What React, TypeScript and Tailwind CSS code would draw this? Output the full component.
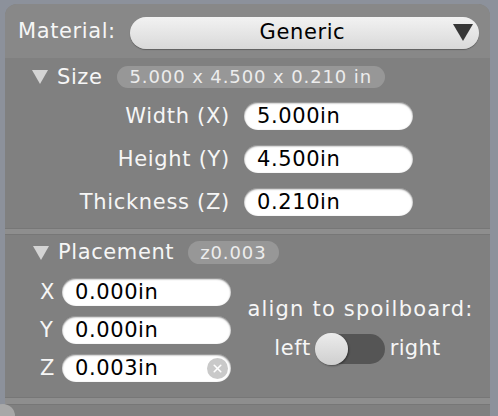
import { X } from "lucide-react";

function Field({ value, clear }: { value: string; clear?: boolean }) {
  return (
    <div className="flex items-center w-[169px] h-[28px] rounded-full bg-white shadow-[inset_0_1px_2px_rgba(0,0,0,0.55)] pl-[13px] pr-[3px]">
      <span className="flex-1 text-[21px] leading-none text-black">{value}</span>
      {clear && (
        <span className="w-[21px] h-[21px] rounded-full bg-[#c9c9c9] flex items-center justify-center">
          <X className="w-[13px] h-[13px] text-white" strokeWidth={3} />
        </span>
      )}
    </div>
  );
}

function Tri() {
  return (
    <svg width="16" height="14" viewBox="0 0 16 14" className="shrink-0">
      <polygon points="0,0 16,0 8,14" fill="#d4d4d4" />
    </svg>
  );
}

export default function App() {
  const dims = [
    ["Width (X)", "5.000in"],
    ["Height (Y)", "4.500in"],
    ["Thickness (Z)", "0.210in"],
  ];
  const place = [
    ["X", "0.000in"],
    ["Y", "0.000in"],
    ["Z", "0.003in"],
  ];

  return (
    <div className="w-[498px] h-[416px] overflow-hidden bg-[#8c919b] pt-[4px] pl-[5px] font-['DejaVu_Sans',sans-serif] tracking-[0.6px] text-[#f6f6f6]">
      <div className="w-[485px] h-[412px] bg-[#808080] rounded-t-[12px] flex flex-col relative">
        {/* Material */}
        <div className="h-[54px] bg-[#888888] rounded-t-[12px] flex items-center pl-[13px] pr-[11px] gap-[14px]">
          <span className="text-[21px] leading-none">Material:</span>
          <div className="flex-1 h-[32px] mt-[3px] rounded-full bg-gradient-to-b from-[#f2f2f2] to-[#d9d9d9] shadow-[0_1px_1px_rgba(0,0,0,0.3)] flex items-center pl-[22px] pr-[6px]">
            <span className="flex-1 text-center text-[21px] leading-none text-black">Generic</span>
            <svg width="20" height="17" viewBox="0 0 20 17">
              <polygon points="0,0 20,0 10,17" fill="#373737" />
            </svg>
          </div>
        </div>

        {/* Size */}
        <div className="h-[170px] pt-[8px] flex flex-col">
          <div className="flex items-center h-[22px] pl-[27px]">
            <Tri />
            <span className="ml-[9px] text-[21px] leading-none">Size</span>
            <span className="ml-[14px] h-[22px] px-[13px] rounded-full bg-[#979797] text-[18px] leading-[22px] tracking-[0.9px] text-[#ececec]">
              5.000 x 4.500 x 0.210 in
            </span>
          </div>
          <div className="mt-[14px] flex flex-col gap-[15px]">
            {dims.map(([l, v]) => (
              <div key={l} className="flex items-center">
                <span className="w-[225px] text-right text-[21px] leading-none tracking-[0.7px]">{l}</span>
                <div className="ml-[14px]">
                  <Field value={v} />
                </div>
              </div>
            ))}
          </div>
        </div>

        <div className="h-[7px] bg-[#8e8e8e] border-y border-[#777]" />

        {/* Placement */}
        <div className="h-[162px] pt-[6px] flex flex-col">
          <div className="flex items-center h-[23px] pl-[28px]">
            <Tri />
            <span className="ml-[9px] text-[21px] leading-none">Placement</span>
            <span className="ml-[14px] h-[23px] px-[12px] rounded-full bg-[#979797] text-[18px] leading-[23px] tracking-[0.9px] text-[#ececec]">
              z0.003
            </span>
          </div>
          <div className="mt-[14px] flex">
            <div className="flex flex-col gap-[10px] pl-[35px]">
              {place.map(([l, v]) => (
                <div key={l} className="flex items-center gap-[6px]">
                  <span className="w-[16px] text-[21px] leading-none">{l}</span>
                  <Field value={v} clear={l === "Z"} />
                </div>
              ))}
            </div>
            <div className="flex-1 flex flex-col items-center justify-center gap-[12px]">
              <span className="text-[21px] leading-[25px] tracking-[1.2px]">align to spoilboard:</span>
              <div className="flex items-center gap-[5px] mr-[6px]">
                <span className="text-[21px] leading-none">left</span>
                <div className="relative w-[69px] h-[30px] rounded-full bg-[#555555]">
                  <span className="absolute -left-[1px] -top-[1px] w-[33px] h-[32px] rounded-full bg-gradient-to-b from-[#ececec] to-[#cfcfcf] shadow-[1px_1px_2px_rgba(0,0,0,0.4)]" />
                </div>
                <span className="text-[21px] leading-none tracking-[0.3px]">right</span>
              </div>
            </div>
          </div>
        </div>

        <div className="h-[8px] bg-[#8e8e8e] border-y border-[#777]" />
        <div className="flex-1" />
        <span className="absolute -left-[14px] bottom-[-12px] w-[24px] h-[24px] rounded-full bg-[#a8a8a8]" />
      </div>
    </div>
  );
}
